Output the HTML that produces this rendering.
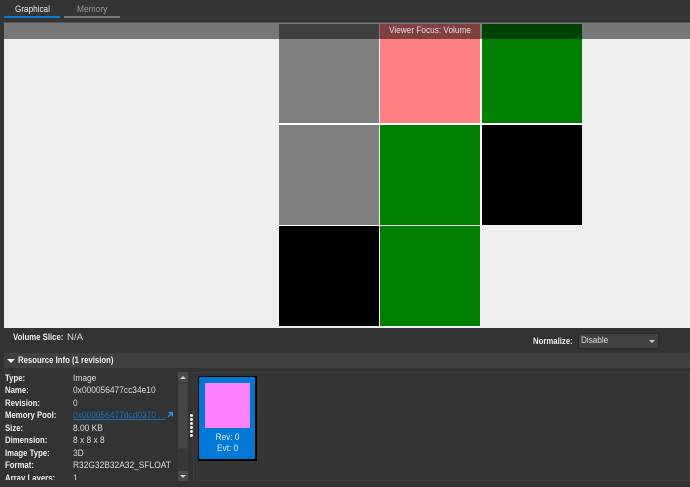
<!DOCTYPE html>
<html><head><meta charset="utf-8">
<style>
html,body{margin:0;padding:0;background:#333;}
body{width:690px;height:487px;overflow:hidden;position:relative;font-family:"Liberation Sans",sans-serif;font-size:10px;color:#e6e6e6;}
div{position:absolute;box-sizing:border-box;}
.t{white-space:nowrap;line-height:12px;font-size:9.6px;transform-origin:0 0;transform:scaleX(.875);}
.h{font-weight:bold;color:#eee;transform:scaleX(.81);}
.b{font-weight:bold;color:#eee;left:5px;transform:scaleX(.81);}
.v{left:73px;color:#ddd;}
.d{left:190px;width:3px;height:3px;background:#eee;border-radius:50%;}
</style></head><body>
<div style="left:0;top:0;width:690px;height:21px;background:#353535"></div>
<div class="t" style="left:15px;top:4px;color:#eee;transform:scaleX(.85)">Graphical</div>
<div style="left:4px;top:16px;width:56px;height:2px;background:#0b78d0"></div>
<div class="t" style="left:77px;top:4px;color:#999">Memory</div>
<div style="left:64px;top:16px;width:56px;height:2px;background:#777"></div>

<div style="left:3px;top:22px;width:687px;height:1px;background:#555"></div>
<div style="left:4px;top:23px;width:686px;height:305px;background:#efefef"></div>
<div style="left:279px;top:24px;width:100px;height:99px;background:#808080"></div>
<div style="left:380px;top:24px;width:100px;height:99px;background:#ff8080"></div>
<div style="left:482px;top:24px;width:100px;height:99px;background:#008000"></div>
<div style="left:279px;top:123px;width:303px;height:2px;background:#fff"></div>
<div style="left:379px;top:24px;width:1px;height:302px;background:#fff"></div>
<div style="left:480px;top:24px;width:2px;height:201px;background:#fff"></div>
<div style="left:279px;top:125px;width:100px;height:100px;background:#808080"></div>
<div style="left:380px;top:125px;width:100px;height:100px;background:#008000"></div>
<div style="left:482px;top:125px;width:100px;height:100px;background:#000"></div>
<div style="left:279px;top:225px;width:202px;height:1px;background:#fff"></div>
<div style="left:279px;top:226px;width:100px;height:100px;background:#000"></div>
<div style="left:380px;top:226px;width:100px;height:100px;background:#008000"></div>
<div style="left:4px;top:23px;width:686px;height:16px;background:rgba(0,0,0,.5)"></div>
<div class="t" style="left:389px;top:25px;color:#e8dcdc;transform:scaleX(.86)">Viewer Focus: Volume</div>

<div class="t h" style="left:13px;top:332px">Volume Slice:</div>
<div class="t" style="left:67px;top:332px;color:#ddd;transform:none">N/A</div>
<div class="t h" style="left:533px;top:336px">Normalize:</div>
<div style="left:578px;top:333px;width:81px;height:16px;background:#414141;border:1px solid #2c2c2c;border-radius:2px"></div>
<div class="t" style="left:581px;top:335px;color:#ddd;transform:scaleX(.85)">Disable</div>
<div style="left:649px;top:340px;width:0;height:0;border-left:3px solid transparent;border-right:3px solid transparent;border-top:3px solid #ccc"></div>

<div style="left:4px;top:353px;width:686px;height:15px;background:#404040"></div>
<div style="left:7px;top:359px;width:0;height:0;border-left:4px solid transparent;border-right:4px solid transparent;border-top:4px solid #eee"></div>
<div class="t h" style="left:18px;top:355px">Resource Info (1 revision)</div>

<div style="left:0;top:371px;width:178px;height:109px;overflow:hidden">
<div class="t b" style="top:2px">Type:</div><div class="t v" style="top:2px">Image</div>
<div class="t b" style="top:14px">Name:</div><div class="t v" style="top:14px">0x000056477cc34e10</div>
<div class="t b" style="top:27px">Revision:</div><div class="t v" style="top:27px">0</div>
<div class="t b" style="top:39px">Memory Pool:</div><div class="t v" style="top:39px;color:#1a70b8;text-decoration:underline">0x000056477dcd0370 ...</div>
<div class="t b" style="top:52px">Size:</div><div class="t v" style="top:52px">8.00 KB</div>
<div class="t b" style="top:64px">Dimension:</div><div class="t v" style="top:64px">8 x 8 x 8</div>
<div class="t b" style="top:77px">Image Type:</div><div class="t v" style="top:77px">3D</div>
<div class="t b" style="top:89px">Format:</div><div class="t v" style="top:89px">R32G32B32A32_SFLOAT</div>
<div class="t b" style="top:102px">Array Layers:</div><div class="t v" style="top:102px">1</div>
</div>
<svg style="position:absolute;left:167px;top:411px" width="7" height="7" viewBox="0 0 7 7"><path d="M1 6L4 3M2.500 1.500H5.500V4.500Z" stroke="#2a8fe0" stroke-width="1.300" fill="#2a8fe0"/></svg>

<div style="left:178px;top:372px;width:10px;height:109px;background:#383838"></div>
<div style="left:178px;top:372px;width:10px;height:10px;background:#4a4a4a"></div>
<div style="left:180px;top:376px;width:0;height:0;border-left:3px solid transparent;border-right:3px solid transparent;border-bottom:3px solid #ccc"></div>
<div style="left:178px;top:382px;width:10px;height:67px;background:#454545;border:1px solid #3e3e3e"></div>
<div style="left:178px;top:471px;width:10px;height:10px;background:#4a4a4a"></div>
<div style="left:180px;top:475px;width:0;height:0;border-left:3px solid transparent;border-right:3px solid transparent;border-top:3px solid #ccc"></div>

<div class="d" style="top:414px"></div>
<div class="d" style="top:418px"></div>
<div class="d" style="top:422px"></div>
<div class="d" style="top:426px"></div>
<div class="d" style="top:430px"></div>
<div class="d" style="top:434px"></div>

<div style="left:193px;top:372px;width:497px;height:109px;background:#353535;border:1px solid #3d3d3d"></div>
<div style="left:198px;top:376px;width:59px;height:85px;background:#0078d4;border:1px solid #000;border-width:1px 2px 2px 1px"></div>
<div style="left:205px;top:383px;width:45px;height:45px;background:#ff80ff"></div>
<div class="t" style="left:198px;top:432px;width:59px;text-align:center;color:#e6eef6;line-height:11px;transform-origin:50% 0;transform:scaleX(.86)">Rev: 0<br>Evt: 0</div>
</body></html>
